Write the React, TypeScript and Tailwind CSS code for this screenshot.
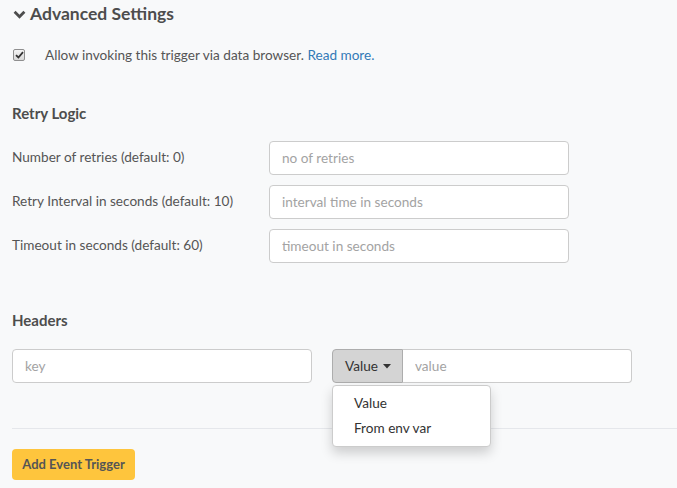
import React from "react";

const font = { fontFamily: "Lato, 'Open Sans', sans-serif" };

const RetryRow = ({ label, placeholder }: { label: string; placeholder: string }) => (
  <div className="flex items-center h-[34px]">
    <label className="w-[257px] text-[13.6px] text-[#555]">{label}</label>
    <input
      className="w-[300px] h-[34px] rounded border border-[#ccc] bg-white px-3 text-[13.6px] outline-none placeholder:text-[#a3a3a3]"
      placeholder={placeholder}
    />
  </div>
);

export default function App() {
  return (
    <div className="w-[677px] h-[488px] overflow-hidden bg-[#f8f9fa] text-[#555]" style={font}>
      <div className="pl-3">
        <div className="flex items-center gap-[4px] h-[28px] text-[#4d4d4d]">
          <svg width="13" height="13" viewBox="0 0 13 13" className="ml-[1px]">
            <path d="M1.6 3.8 L6.5 8.7 L11.4 3.8" fill="none" stroke="#4d4d4d" strokeWidth="2.8" />
          </svg>
          <span className="text-[17.5px] font-bold">Advanced Settings</span>
        </div>

        <div className="flex items-center mt-[18px] h-[18px]">
          <span className="ml-[1px] flex items-center justify-center w-[12px] h-[12px] rounded-[2px] border border-[#8f8f8f] bg-gradient-to-b from-[#f4f4f4] to-[#d8d8d8]">
            <svg width="9" height="8" viewBox="0 0 9 8">
              <path d="M1 4.2 L3.4 6.5 L8 1.2" fill="none" stroke="#333" strokeWidth="1.8" />
            </svg>
          </span>
          <span className="ml-[20px] text-[13.6px] text-[#555]">
            Allow invoking this trigger via data browser.{" "}
            <a className="text-[#337ab7]">Read more.</a>
          </span>
        </div>

        <div className="mt-[38px] text-[15px] font-bold text-[#4d4d4d]">Retry Logic</div>

        <div className="mt-[16px] flex flex-col gap-[10px]">
          <RetryRow label="Number of retries (default: 0)" placeholder="no of retries" />
          <RetryRow label="Retry Interval in seconds (default: 10)" placeholder="interval time in seconds" />
          <RetryRow label="Timeout in seconds (default: 60)" placeholder="timeout in seconds" />
        </div>

        <div className="mt-[46px] text-[15px] font-bold text-[#4d4d4d]">Headers</div>

        <div className="mt-[18px] flex items-start gap-[20px]">
          <input
            className="w-[300px] h-[34px] rounded border border-[#ccc] bg-white px-3 text-[13.6px] outline-none placeholder:text-[#a3a3a3]"
            placeholder="key"
          />
          <div className="relative flex w-[300px] h-[34px]">
            <button className="flex items-center gap-[5px] w-[71px] h-[34px] rounded-l border border-[#adadad] bg-[#d4d4d4] pl-[12px] text-[13.6px] text-[#333]">
              Value
              <svg width="8" height="5" viewBox="0 0 8 5">
                <path d="M0 0 L8 0 L4 4.5 Z" fill="#333" />
              </svg>
            </button>
            <input
              className="flex-1 h-[34px] rounded-r border border-l-0 border-[#ccc] bg-white px-3 text-[13.6px] outline-none placeholder:text-[#a3a3a3]"
              placeholder="value"
            />
            <div className="absolute left-0 top-[36px] z-10 w-[159px] rounded border border-[#ccc] bg-white py-[5px] shadow-[0_6px_12px_rgba(0,0,0,0.175)]">
              <div className="h-[25px] px-[21px] flex items-center text-[13.6px] text-[#333]">Value</div>
              <div className="h-[25px] px-[21px] flex items-center text-[13.6px] text-[#333]">From env var</div>
            </div>
          </div>
        </div>

        <div className="mt-[45px] h-px bg-[#e5e7eb]" />

        <button className="mt-[20px] h-[31px] w-[123px] rounded bg-[#fec53d] text-[13px] font-bold text-[#555]">
          Add Event Trigger
        </button>
      </div>
    </div>
  );
}
